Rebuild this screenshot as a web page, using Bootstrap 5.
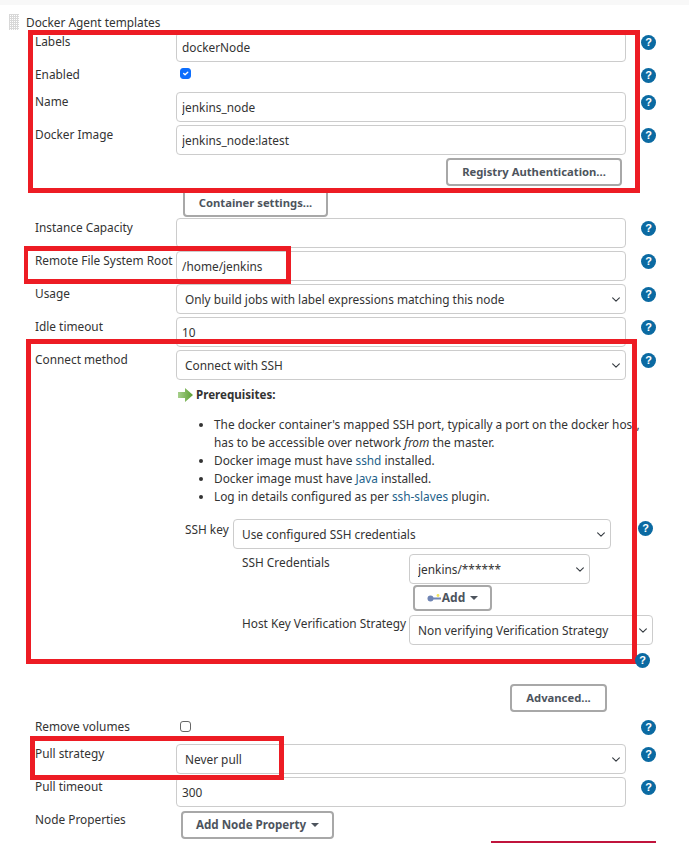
<!DOCTYPE html>
<html lang="en">
<head>
  <meta charset="UTF-8">
  <meta name="viewport" content="width=device-width, initial-scale=1">
  <title>Docker Agent templates</title>
  <link href="https://cdn.jsdelivr.net/npm/bootstrap@5.3.3/dist/css/bootstrap.min.css" rel="stylesheet">
  <style>
    html, body { height: 847px; overflow: hidden; }
    body { background: #fff; color: #333; font-family: "Noto Sans", "Open Sans", sans-serif; font-size: 11.85px; line-height: 18px; }
    .top-band { height: 5px; background: #f8f8f8; }
    .sheet { position: relative; height: 842px; }
    .tpl-head { display: flex; align-items: center; gap: 7px; padding: 6px 0 0 9px; height: 27px; color: #333; }
    .grip { width: 10px; height: 16px; margin-top: 1px; background-image: linear-gradient(#d8d8d8 1px, transparent 1px), linear-gradient(90deg, #d8d8d8 1px, transparent 1px); background-size: 2px 2px; }
    .cfg-rows { padding: 0 0 0 35px; }
    .cfg-row { display: flex; margin-bottom: 3px; }
    .cfg-label { width: 141px; flex: none; white-space: nowrap; }
    .cfg-field { width: 450px; flex: none; }
    .help-dot { position: relative; z-index: 3; flex: none; width: 15px; height: 15px; margin: 3px 0 0 15px; border-radius: 50%; background: #0b6aa2; color: #fff; font: bold 11px/15px "Liberation Sans", sans-serif; text-align: center; }
    .form-control, .form-select { height: 30px; min-height: 30px; font-size: 11.85px; line-height: 18px; color: #333; border: 1px solid #ccc; border-radius: 4px; box-shadow: none; }
    .form-control { padding: 0 5px 1px; }
    .form-select { padding: 0 20px 1px 8px; background-size: 12px 9px; background-position: right 3px center; }
    .chk-line { height: 24px; }
    .form-check-input { width: 11px; height: 11px; margin: 3px 0 0 4px; border-color: #666; border-radius: 2px; }
    .form-check-input:checked { background-color: #0d6efd; border-color: #0d6efd; }
    .chk-low { margin-top: 4px; }
    .btn-jk { display: inline-flex; align-items: center; justify-content: center; height: 28px; padding: 0; background: #fff; border: 2px solid #a8a8a8; border-radius: 4px; color: #4d545d; font-size: 11.25px; font-weight: 700; line-height: 18px; }
    .btn-jk.dropdown-toggle::after { margin-left: 5px; border-top-width: 4px; border-left-width: 4px; border-right-width: 4px; }
    .btn-registry { width: 176px; margin: 0 4px 0 auto; }
    .btn-wrap { display: flex; height: 31px; }
    .btn-container { width: 145px; margin-left: 148px; }
    .prereq { display: flex; align-items: center; gap: 3px; margin: 6px 0 0 2px; height: 18px; font-size: 11.6px; font-weight: 700; }
    .prereq-list { margin: 11px 0 0; padding-left: 38px; width: 470px; }
    .prereq-list a { color: #1d5f8a; text-decoration: none; }
    .ssh-key { display: flex; margin-top: 14px; margin-left: 9px; }
    .ssh-key .cfg-sub { width: 48px; flex: none; padding-top: 1px; }
    .ssh-key .form-select { width: 378px; flex: none; }
    .ssh-help { margin-left: 27px; margin-top: 2px; }
    .sub-row { display: flex; margin-left: 66px; }
    .sub-row .sub-label { width: 167px; flex: none; margin-top: -1px; white-space: nowrap; }
    .btn-add { width: 79px; height: 26px; margin: 1px 0 4px 4px; font-size: 12px; }
    .btn-node { width: 153px; margin: 1px 0 0 5px; font-size: 11.6px; }
    .key-ico { margin-right: 1px; }
    .lone-help { display: flex; height: 39px; padding-left: 600px; }
    .lone-help .help-dot { margin: 8px 0 0 0; }
    .adv-wrap { display: flex; height: 33px; }
    .btn-adv { width: 97px; margin-left: 475px; }
    .bottom-line { position: absolute; left: 491px; top: 836px; width: 165px; height: 2px; background: #c0143c; }
    .ann { position: absolute; z-index: 2; border: 5px solid #ed1c24; pointer-events: none; }
    .ann-a { left: 28px; top: 25px; width: 612px; height: 163px; }
    .ann-b { left: 24px; top: 241px; width: 267px; height: 38px; border-left-width: 4px; }
    .ann-c { left: 26px; top: 334px; width: 611px; height: 325px; }
    .ann-d { left: 30px; top: 731px; width: 254px; height: 44px; }
  </style>
</head>
<body>
  <div class="top-band"></div>
  <div class="sheet">
    <div class="tpl-head"><span class="grip"></span><span>Docker Agent templates</span></div>
    <div class="cfg-rows">
      <div class="cfg-row">
        <div class="cfg-label">Labels</div>
        <div class="cfg-field"><input class="form-control" value="dockerNode"></div>
        <span class="help-dot">?</span>
      </div>
      <div class="cfg-row">
        <div class="cfg-label">Enabled</div>
        <div class="cfg-field chk-line"><input class="form-check-input" type="checkbox" checked></div>
        <span class="help-dot">?</span>
      </div>
      <div class="cfg-row">
        <div class="cfg-label">Name</div>
        <div class="cfg-field"><input class="form-control" value="jenkins_node"></div>
        <span class="help-dot">?</span>
      </div>
      <div class="cfg-row">
        <div class="cfg-label">Docker Image</div>
        <div class="cfg-field"><input class="form-control" value="jenkins_node:latest"></div>
        <span class="help-dot">?</span>
      </div>
      <div class="btn-wrap">
        <div class="cfg-field d-flex" style="margin-left:141px"><button class="btn-jk btn-registry" type="button">Registry Authentication...</button></div>
      </div>
      <div class="btn-wrap" style="height:29px">
        <button class="btn-jk btn-container" type="button">Container settings...</button>
      </div>
      <div class="cfg-row">
        <div class="cfg-label">Instance Capacity</div>
        <div class="cfg-field"><input class="form-control"></div>
        <span class="help-dot">?</span>
      </div>
      <div class="cfg-row">
        <div class="cfg-label">Remote File System Root</div>
        <div class="cfg-field"><input class="form-control" value="/home/jenkins"></div>
        <span class="help-dot">?</span>
      </div>
      <div class="cfg-row">
        <div class="cfg-label">Usage</div>
        <div class="cfg-field">
          <select class="form-select"><option>Only build jobs with label expressions matching this node</option></select>
        </div>
        <span class="help-dot">?</span>
      </div>
      <div class="cfg-row">
        <div class="cfg-label">Idle timeout</div>
        <div class="cfg-field"><input class="form-control" value="10"></div>
        <span class="help-dot">?</span>
      </div>
      <div class="cfg-row mb-0">
        <div class="cfg-label">Connect method</div>
        <div class="cfg-field">
          <select class="form-select"><option>Connect with SSH</option></select>
          <div class="prereq">
            <svg width="15" height="14" viewBox="0 0 15 14"><defs><linearGradient id="gr" x1="0" x2="1"><stop offset="0" stop-color="#a7d08c"/><stop offset="1" stop-color="#5c9e31"/></linearGradient></defs><path d="M0 4h7V0l8 7-8 7v-4H0z" fill="url(#gr)"/></svg>
            <span>Prerequisites:</span>
          </div>
          <ul class="prereq-list">
            <li>The docker container's mapped SSH port, typically a port on the docker host, has to be accessible over network <em>from</em> the master.</li>
            <li>Docker image must have <a href="#">sshd</a> installed.</li>
            <li>Docker image must have <a href="#">Java</a> installed.</li>
            <li>Log in details configured as per <a href="#">ssh-slaves</a> plugin.</li>
          </ul>
          <div class="ssh-key">
            <div class="cfg-sub">SSH key</div>
            <select class="form-select"><option>Use configured SSH credentials</option></select>
            <span class="help-dot ssh-help">?</span>
          </div>
          <div class="sub-row" style="margin-top:5px">
            <div class="sub-label">SSH Credentials</div>
            <select class="form-select" style="width:181px;flex:none"><option>jenkins/******</option></select>
          </div>
          <div class="sub-row">
            <div class="sub-label"></div>
            <button class="btn-jk btn-add dropdown-toggle" type="button">
              <svg class="key-ico" width="14" height="9" viewBox="0 0 14 9"><circle cx="3.5" cy="4.5" r="3" fill="#6f84b4"/><rect x="5" y="3.5" width="9" height="2" fill="#6f84b4"/><circle cx="11" cy="1.5" r="1.4" fill="#f3e45a"/></svg>Add
            </button>
          </div>
          <div class="sub-row">
            <div class="sub-label">Host Key Verification Strategy</div>
            <select class="form-select" style="width:244px;flex:none"><option>Non verifying Verification Strategy</option></select>
          </div>
        </div>
        <span class="help-dot">?</span>
      </div>
      <div class="lone-help"><span class="help-dot">?</span></div>
      <div class="adv-wrap"><button class="btn-jk btn-adv" type="button">Advanced...</button></div>
      <div class="cfg-row">
        <div class="cfg-label">Remove volumes</div>
        <div class="cfg-field chk-line"><input class="form-check-input chk-low" type="checkbox"></div>
        <span class="help-dot">?</span>
      </div>
      <div class="cfg-row">
        <div class="cfg-label">Pull strategy</div>
        <div class="cfg-field">
          <select class="form-select"><option>Never pull</option></select>
        </div>
        <span class="help-dot">?</span>
      </div>
      <div class="cfg-row">
        <div class="cfg-label">Pull timeout</div>
        <div class="cfg-field"><input class="form-control" value="300"></div>
        <span class="help-dot">?</span>
      </div>
      <div class="cfg-row">
        <div class="cfg-label">Node Properties</div>
        <div class="cfg-field"><button class="btn-jk btn-node dropdown-toggle" type="button">Add Node Property</button></div>
      </div>
    </div>
    <div class="bottom-line"></div>
    <div class="ann ann-a"></div>
    <div class="ann ann-b"></div>
    <div class="ann ann-c"></div>
    <div class="ann ann-d"></div>
  </div>
  <script src="https://cdn.jsdelivr.net/npm/bootstrap@5.3.3/dist/js/bootstrap.bundle.min.js"></script>
</body>
</html>
